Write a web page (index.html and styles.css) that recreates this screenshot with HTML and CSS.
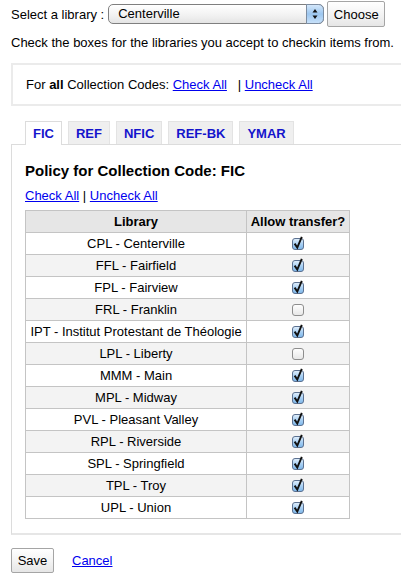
FILE: index.html
```html
<!DOCTYPE html>
<html>
<head>
<meta charset="utf-8">
<link rel="stylesheet" href="styles.css">
</head>
<body>
<svg class="defs" width="0" height="0">
  <defs>
    <linearGradient id="cbOn" x1="0" y1="0" x2="0" y2="1">
      <stop offset="0" stop-color="#e4f1fd"/>
      <stop offset="0.5" stop-color="#a9d0f3"/>
      <stop offset="1" stop-color="#7cb6ea"/>
    </linearGradient>
    <linearGradient id="cbOff" x1="0" y1="0" x2="0" y2="1">
      <stop offset="0" stop-color="#ffffff"/>
      <stop offset="1" stop-color="#e6e6e6"/>
    </linearGradient>
    <linearGradient id="selArr" x1="0" y1="0" x2="0" y2="1">
      <stop offset="0" stop-color="#d7e9fb"/>
      <stop offset="0.5" stop-color="#9cc6ef"/>
      <stop offset="1" stop-color="#c9e2fa"/>
    </linearGradient>
  </defs>
</svg>
<div class="page">
  <form class="lib-select">
    <label class="lib-label">Select a library :</label>
    <span class="select-wrap">
      <select class="lib-dd"><option>Centerville</option></select>
      <svg class="select-arrow" width="18" height="20" viewBox="0 0 18 20"><path d="M0.5 0.5 H12.5 A5 5 0 0 1 17.5 5.5 V14.5 A5 5 0 0 1 12.5 19.5 H0.5 Z" fill="url(#selArr)" stroke="#7c8ca0"/><path d="M6.5 8.5 L9 5 L11.5 8.5 Z M6.5 11.5 L9 15 L11.5 11.5 Z" fill="#111"/></svg>
    </span>
    <button type="button" class="btn choose">Choose</button>
  </form>
  <p class="intro">Check the boxes for the libraries you accept to checkin items from.</p>
  <div class="all-box">For <b>all</b> Collection Codes: <a href="#">Check All</a>&nbsp;&nbsp; | <a href="#">Uncheck All</a></div>

  <div class="tabs">
    <ul class="tab-list">
      <li class="tab active"><a href="#">FIC</a></li>
      <li class="tab"><a href="#">REF</a></li>
      <li class="tab"><a href="#">NFIC</a></li>
      <li class="tab"><a href="#">REF-BK</a></li>
      <li class="tab"><a href="#">YMAR</a></li>
    </ul>
    <div class="panel">
      <h3 class="policy-title">Policy for Collection Code: FIC</h3>
      <p class="links"><a href="#">Check All</a> | <a href="#">Uncheck All</a></p>
      <table class="policy">
        <colgroup><col class="c1"><col class="c2"></colgroup>
        <thead><tr><th>Library</th><th>Allow transfer?</th></tr></thead>
        <tbody>
          <tr><td>CPL - Centerville</td><td><svg class="cb" width="14" height="15" viewBox="0 0 14 15"><rect x="1.5" y="2.5" width="11" height="11" rx="2.5" fill="url(#cbOn)" stroke="#5c7190"/><path d="M3.6 7.6 L6.3 11.6 L10.8 0.8" fill="none" stroke="#111" stroke-width="1.9"/></svg></td></tr>
          <tr><td>FFL - Fairfield</td><td><svg class="cb" width="14" height="15" viewBox="0 0 14 15"><rect x="1.5" y="2.5" width="11" height="11" rx="2.5" fill="url(#cbOn)" stroke="#5c7190"/><path d="M3.6 7.6 L6.3 11.6 L10.8 0.8" fill="none" stroke="#111" stroke-width="1.9"/></svg></td></tr>
          <tr><td>FPL - Fairview</td><td><svg class="cb" width="14" height="15" viewBox="0 0 14 15"><rect x="1.5" y="2.5" width="11" height="11" rx="2.5" fill="url(#cbOn)" stroke="#5c7190"/><path d="M3.6 7.6 L6.3 11.6 L10.8 0.8" fill="none" stroke="#111" stroke-width="1.9"/></svg></td></tr>
          <tr><td>FRL - Franklin</td><td><svg class="cb" width="14" height="15" viewBox="0 0 14 15"><rect x="1.5" y="2.5" width="11" height="11" rx="2.5" fill="url(#cbOff)" stroke="#8d8d8d"/></svg></td></tr>
          <tr><td>IPT - Institut Protestant de Théologie</td><td><svg class="cb" width="14" height="15" viewBox="0 0 14 15"><rect x="1.5" y="2.5" width="11" height="11" rx="2.5" fill="url(#cbOn)" stroke="#5c7190"/><path d="M3.6 7.6 L6.3 11.6 L10.8 0.8" fill="none" stroke="#111" stroke-width="1.9"/></svg></td></tr>
          <tr><td>LPL - Liberty</td><td><svg class="cb" width="14" height="15" viewBox="0 0 14 15"><rect x="1.5" y="2.5" width="11" height="11" rx="2.5" fill="url(#cbOff)" stroke="#8d8d8d"/></svg></td></tr>
          <tr><td>MMM - Main</td><td><svg class="cb" width="14" height="15" viewBox="0 0 14 15"><rect x="1.5" y="2.5" width="11" height="11" rx="2.5" fill="url(#cbOn)" stroke="#5c7190"/><path d="M3.6 7.6 L6.3 11.6 L10.8 0.8" fill="none" stroke="#111" stroke-width="1.9"/></svg></td></tr>
          <tr><td>MPL - Midway</td><td><svg class="cb" width="14" height="15" viewBox="0 0 14 15"><rect x="1.5" y="2.5" width="11" height="11" rx="2.5" fill="url(#cbOn)" stroke="#5c7190"/><path d="M3.6 7.6 L6.3 11.6 L10.8 0.8" fill="none" stroke="#111" stroke-width="1.9"/></svg></td></tr>
          <tr><td>PVL - Pleasant Valley</td><td><svg class="cb" width="14" height="15" viewBox="0 0 14 15"><rect x="1.5" y="2.5" width="11" height="11" rx="2.5" fill="url(#cbOn)" stroke="#5c7190"/><path d="M3.6 7.6 L6.3 11.6 L10.8 0.8" fill="none" stroke="#111" stroke-width="1.9"/></svg></td></tr>
          <tr><td>RPL - Riverside</td><td><svg class="cb" width="14" height="15" viewBox="0 0 14 15"><rect x="1.5" y="2.5" width="11" height="11" rx="2.5" fill="url(#cbOn)" stroke="#5c7190"/><path d="M3.6 7.6 L6.3 11.6 L10.8 0.8" fill="none" stroke="#111" stroke-width="1.9"/></svg></td></tr>
          <tr><td>SPL - Springfield</td><td><svg class="cb" width="14" height="15" viewBox="0 0 14 15"><rect x="1.5" y="2.5" width="11" height="11" rx="2.5" fill="url(#cbOn)" stroke="#5c7190"/><path d="M3.6 7.6 L6.3 11.6 L10.8 0.8" fill="none" stroke="#111" stroke-width="1.9"/></svg></td></tr>
          <tr><td>TPL - Troy</td><td><svg class="cb" width="14" height="15" viewBox="0 0 14 15"><rect x="1.5" y="2.5" width="11" height="11" rx="2.5" fill="url(#cbOn)" stroke="#5c7190"/><path d="M3.6 7.6 L6.3 11.6 L10.8 0.8" fill="none" stroke="#111" stroke-width="1.9"/></svg></td></tr>
          <tr><td>UPL - Union</td><td><svg class="cb" width="14" height="15" viewBox="0 0 14 15"><rect x="1.5" y="2.5" width="11" height="11" rx="2.5" fill="url(#cbOn)" stroke="#5c7190"/><path d="M3.6 7.6 L6.3 11.6 L10.8 0.8" fill="none" stroke="#111" stroke-width="1.9"/></svg></td></tr>
        </tbody>
      </table>
    </div>
  </div>

  <div class="actions">
    <button type="button" class="btn save">Save</button>
    <a href="#" class="cancel">Cancel</a>
  </div>
</div>
</body>
</html>
```

FILE: styles.css
```css
html, body {
  margin: 0;
  padding: 0;
  background: #fff;
}
body {
  font-family: "Liberation Sans", Arial, sans-serif;
  font-size: 13px;
  line-height: 15px;
  color: #000;
}
.defs {
  position: absolute;
  width: 0;
  height: 0;
}
a {
  color: #0000ee;
  text-decoration: underline;
}
.page {
  padding: 1px 0 0 11px;
}
.lib-select {
  display: flex;
  align-items: center;
  height: 26px;
  margin: 0;
}
.lib-label {
  margin-right: 4px;
  margin-top: 1px;
}
.select-wrap {
  position: relative;
  display: inline-block;
  width: 216px;
  height: 20px;
  margin-top: -1px;
}
.lib-dd {
  -webkit-appearance: none;
  appearance: none;
  box-sizing: border-box;
  width: 216px;
  height: 20px;
  margin: 0;
  padding: 0 0 0 9px;
  border: 1px solid #7f7f7f;
  border-radius: 5px;
  background: linear-gradient(#ffffff, #f1f1f1 60%, #e4e4e4);
  font-family: "Liberation Sans", Arial, sans-serif;
  font-size: 13px;
  color: #000;
  box-shadow: inset 0 1px 0 #fff;
}
.select-arrow {
  position: absolute;
  right: 0;
  top: 0;
}
.btn {
  box-sizing: border-box;
  font-family: "Liberation Sans", Arial, sans-serif;
  font-size: 13px;
  color: #000;
  border: 1px solid #a5a5a5;
  border-radius: 2px;
  background: linear-gradient(#ffffff, #f4f4f4 50%, #e6e6e6);
  padding: 0;
  margin: 0;
}
.choose {
  width: 58px;
  height: 26px;
  margin-left: 3px;
}
.intro {
  margin: 8px 0 0;
}
.all-box {
  margin-top: 13px;
  border: 2px solid #ebebeb;
  border-right: none;
  padding: 12px 0 12px 13px;
}
.tabs {
  margin-top: 15px;
}
.tab-list {
  list-style: none;
  margin: 0;
  padding: 0 0 0 14px;
  display: flex;
  gap: 6px;
  height: 23px;
  position: relative;
  z-index: 1;
}
.tab {
  box-sizing: border-box;
  height: 23px;
  border: 1px solid #e3e3e3;
  border-bottom: none;
  background: #efefef;
}
.tab a {
  display: block;
  padding: 4px 7px 0;
  font-weight: bold;
  color: #1414cc;
  text-decoration: none;
}
.tab.active {
  background: #fff;
  border-color: #dcdcdc;
  height: 24px;
}
.panel {
  border-top: 1px solid #dcdcdc;
  border-left: 1px solid #dcdcdc;
  border-bottom: 2px solid #e6e6e6;
  padding: 17px 0 14px 13px;
}
.policy-title {
  margin: 0;
  font-size: 15px;
  line-height: 18px;
  font-weight: bold;
}
.links {
  margin: 8px 0 0;
}
.policy {
  margin-top: 7px;
  border-collapse: collapse;
  table-layout: fixed;
  width: 324px;
  border: 1px solid #bcbcbc;
}
.c1 { width: 221px; }
.c2 { width: 103px; }
.policy th, .policy td {
  border: 1px solid #c4c4c4;
  padding: 3px 3px;
  height: 15px;
  text-align: center;
  white-space: nowrap;
}
.policy th {
  background: #e6e6e6;
  font-weight: bold;
}
.policy tbody tr:nth-child(even) td {
  background: #f3f3f3;
}
.cb {
  display: block;
  margin: -1px auto 0;
}
.actions {
  display: flex;
  align-items: center;
  margin-top: 13px;
}
.save {
  width: 43px;
  height: 25px;
}
.cancel {
  margin-left: 18px;
}
```
